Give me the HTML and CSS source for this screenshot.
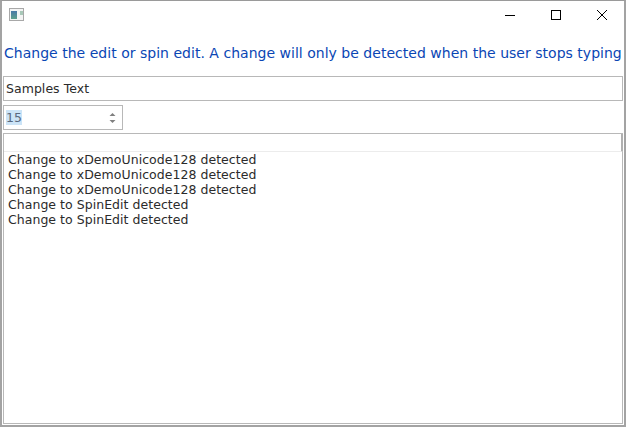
FILE: index.html
```html
<!DOCTYPE html>
<html lang="en">
<head>
    <meta charset="UTF-8">
    <meta name="viewport" content="width=device-width, initial-scale=1.0">
    <title>Change Detection Demo</title>
    <link rel="stylesheet" href="styles.css">
</head>
<body>
    <div class="window">
        <div class="title-bar">
            <svg class="app-icon" width="16" height="14" viewBox="0 0 16 14">
                <defs>
                    <linearGradient id="iconFill" x1="0" y1="0" x2="0" y2="1">
                        <stop offset="0" stop-color="#4a78a8"/>
                        <stop offset="1" stop-color="#5fa08c"/>
                    </linearGradient>
                </defs>
                <rect x="0.5" y="0.5" width="14" height="12" fill="#f4f4f4" stroke="#a8a8a8"/>
                <rect x="2" y="3" width="6" height="8" fill="url(#iconFill)"/>
                <rect x="11" y="3" width="3" height="4" fill="#a8c8b8"/>
            </svg>
            <div class="window-buttons">
                <button class="window-button">
                    <svg width="10" height="10" viewBox="0 0 10 10"><path d="M0 5.5H10" stroke="#000" fill="none"/></svg>
                </button>
                <button class="window-button">
                    <svg width="10" height="10" viewBox="0 0 10 10"><rect x="0.5" y="0.5" width="9" height="9" stroke="#000" fill="none"/></svg>
                </button>
                <button class="window-button">
                    <svg width="10" height="10" viewBox="0 0 10 10"><path d="M0 0L10 10M10 0L0 10" stroke="#000" stroke-width="1" fill="none"/></svg>
                </button>
            </div>
        </div>
        <p class="hint">Change the edit or spin edit. A change will only be detected when the user stops typing</p>
        <div class="edit">Samples Text</div>
        <div class="spin-edit">
            <span class="selected">15</span>
            <svg class="spin-arrows" width="7" height="12" viewBox="0 0 7 12">
                <path d="M3.5 1L6.5 4H0.5Z" fill="#808080"/>
                <path d="M3.5 11L6.5 8H0.5Z" fill="#808080"/>
            </svg>
        </div>
        <div class="log">
            <div class="log-header"></div>
            <ul class="log-lines">
                <li>Change to xDemoUnicode128 detected</li>
                <li>Change to xDemoUnicode128 detected</li>
                <li>Change to xDemoUnicode128 detected</li>
                <li>Change to SpinEdit detected</li>
                <li>Change to SpinEdit detected</li>
            </ul>
        </div>
    </div>
</body>
</html>
```

FILE: styles.css
```css
html, body {
    margin: 0;
    height: 100%;
    background-color: #fff;
}
.window {
    box-sizing: border-box;
    width: 626px;
    height: 427px;
    display: flex;
    flex-direction: column;
    padding: 0 1px 1px 1px;
    border: 2px solid #a3a3a3;
    border-top: 1px solid #9a9a9a;
    font-family: "DejaVu Sans", sans-serif;
    font-size: 12.5px;
    letter-spacing: 0.04px;
    color: #2b2b2b;
}
.title-bar {
    height: 28px;
    display: flex;
    justify-content: space-between;
    margin-left: -1px;
    margin-right: -2px;
}
.app-icon {
    margin: 7px 0 0 7px;
}
.window-buttons {
    display: flex;
}
.window-button {
    width: 46px;
    height: 28px;
    padding: 0;
    border: none;
    background: none;
    display: flex;
    align-items: center;
    justify-content: center;
}
.hint {
    margin: 15px 0 14px;
    padding-left: 1px;
    font-size: 14px;
    letter-spacing: 0.02px;
    line-height: 18px;
    white-space: nowrap;
    color: #0a46b4;
}
.edit {
    box-sizing: border-box;
    height: 25px;
    line-height: 23px;
    padding-left: 2px;
    border: 1px solid #b8b8b8;
}
.spin-edit {
    box-sizing: border-box;
    width: 120px;
    height: 25px;
    margin-top: 4px;
    padding-left: 2px;
    border: 1px solid #b8b8b8;
    display: flex;
    align-items: center;
    justify-content: space-between;
}
.selected {
    background-color: #cce4f7;
    color: #5a6a80;
    line-height: 15px;
}
.spin-arrows {
    margin-right: 6px;
}
.log {
    flex: 1;
    margin-top: 3px;
    border: 1px solid #b8b8b8;
    display: flex;
    flex-direction: column;
}
.log-header {
    height: 17px;
    border-bottom: 1px solid #ececec;
    border-right: 2px solid #b0b0b0;
    margin-right: -1px;
}
.log-lines {
    list-style: none;
    margin: 0;
    padding: 0 0 0 4px;
    line-height: 15px;
}
```
